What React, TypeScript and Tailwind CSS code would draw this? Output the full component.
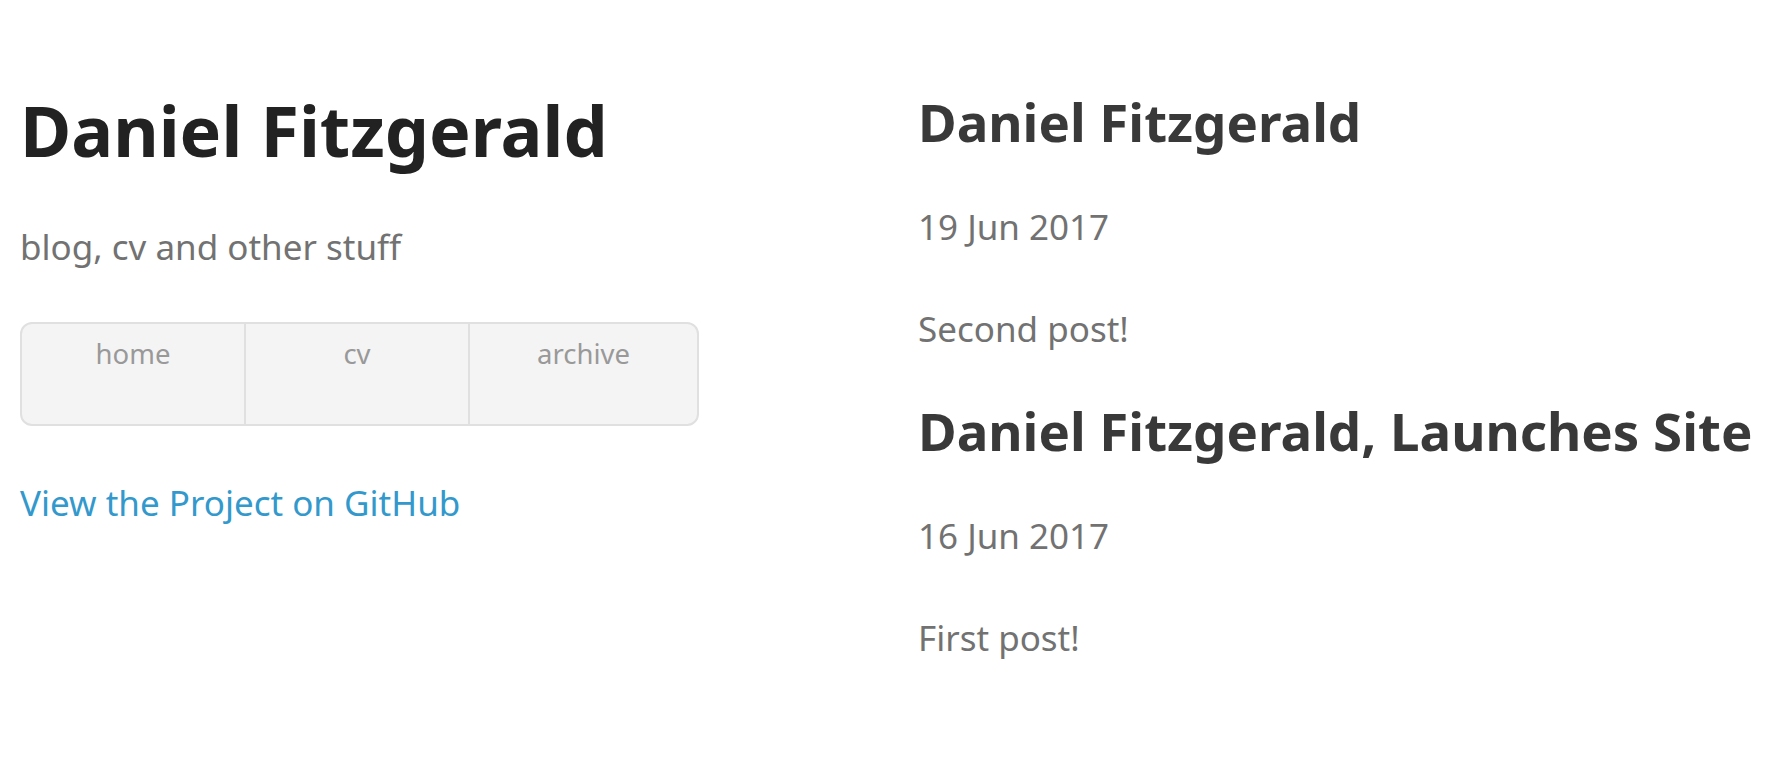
import React from 'react';

const navItems = ['home', 'cv', 'archive'];

const posts = [
  { title: 'Daniel Fitzgerald', date: '19 Jun 2017', excerpt: 'Second post!' },
  { title: 'Daniel Fitzgerald, Launches Site', date: '16 Jun 2017', excerpt: 'First post!' },
];

const App: React.FC = () => {
  return (
    <div
      className="flex min-h-[782px] w-[1778px] overflow-hidden bg-white text-[35px] leading-[52px] text-[#727272]"
      style={{ fontFamily: '"Noto Sans", "Open Sans", sans-serif' }}
    >
      {/* header */}
      <header className="ml-[20px] w-[679px] shrink-0 pt-[92px]">
        <h1 className="mb-[52px] text-[70px] font-bold leading-[77px] text-[#222]">Daniel Fitzgerald</h1>
        <p className="mb-[49px]">blog, cv and other stuff</p>
        <ul className="mb-[51px] flex h-[104px] w-[679px] rounded-[12px] border-2 border-[#e0e0e0] bg-[#f4f4f4]">
          {navItems.map((item, i) => (
            <li
              key={item}
              className={`h-[100px] ${i < 2 ? 'w-[224px] border-r-2 border-[#e0e0e0]' : 'flex-1'}`}
            >
              <a href="#" className="block pt-[16px] text-center text-[27.5px] leading-none text-[#999]">
                {item}
              </a>
            </li>
          ))}
        </ul>
        <p>
          <a href="#" className="text-[#3399cc]">
            View the Project on GitHub
          </a>
        </p>
      </header>

      {/* posts */}
      <section className="ml-[219px] flex-1 pt-[93px]">
        {posts.map((post, i) => (
          <div key={post.date} className={i > 0 ? 'mt-[47px]' : ''}>
            <h2 className="whitespace-nowrap text-[52.8px] font-bold leading-[57px] text-[#393939]">{post.title}</h2>
            <p className="mt-[51px]">{post.date}</p>
            <p className="mt-[50px]">{post.excerpt}</p>
          </div>
        ))}
      </section>
    </div>
  );
};

export default App;
